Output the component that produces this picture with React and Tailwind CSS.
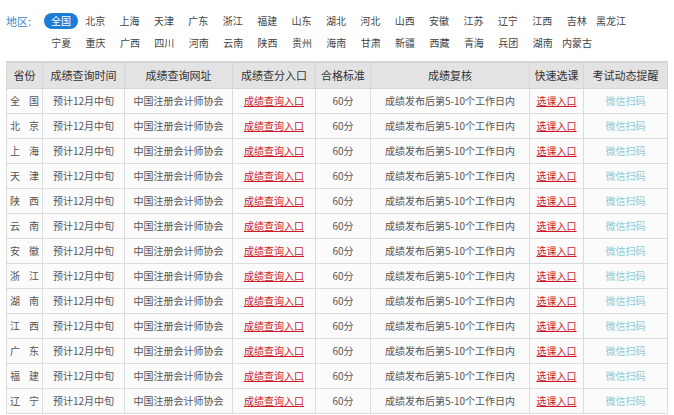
import React from "react";

const row1 = ["北京","上海","天津","广东","浙江","福建","山东","湖北","河北","山西","安徽","江苏","辽宁","江西","吉林","黑龙江"];
const row2 = ["宁夏","重庆","广西","四川","河南","云南","陕西","贵州","海南","甘肃","新疆","西藏","青海","兵团","湖南","内蒙古"];
const provs = [["全","国"],["北","京"],["上","海"],["天","津"],["陕","西"],["云","南"],["安","徽"],["浙","江"],["湖","南"],["江","西"],["广","东"],["福","建"],["辽","宁"]];
const widths = [36,82,108,83,55,159,54,84];
const heads = ["省份","成绩查询时间","成绩查询网址","成绩查分入口","合格标准","成绩复核","快速选课","考试动态提醒"];

export default function App() {
  return (
    <div className="w-[674px] h-[415px] overflow-hidden bg-white whitespace-nowrap" style={{fontFamily:'"Noto Sans CJK SC","Noto Sans",sans-serif'}}>
      <div className="pl-[6px] pt-[10px] flex text-[10px] leading-[22px]">
        <div className="w-[38px] text-[#3b86c8] text-[11px]">地区:</div>
        <div className="flex flex-col">
          <div className="flex">
            <div className="w-[34px] h-[16px] mt-[3px] rounded-full bg-[#1a7ed6] text-white leading-[16px] text-center">全国</div>
            {row1.map((t) => (
              <div key={t} className="w-[34.4px] text-center text-[#444]">{t}</div>
            ))}
          </div>
          <div className="flex">
            {row2.map((t) => (
              <div key={t} className="w-[34.4px] text-center text-[#444]">{t}</div>
            ))}
          </div>
        </div>
      </div>
      <div className="pl-[6px] pt-[7px]">
        <table className="table-fixed border-collapse w-[661px] text-[10px] text-[#555]">
          <colgroup>
            {widths.map((w, i) => <col key={i} style={{ width: w }} />)}
          </colgroup>
          <thead>
            <tr className="h-[26px] bg-[#e4e3e3] border-t-2 border-[#d6d6d6]">
              {heads.map((h) => (
                <th key={h} className="border border-[#d6d6d6] text-[11px] font-normal text-[#333] text-center p-0 leading-[24px]">{h}</th>
              ))}
            </tr>
          </thead>
          <tbody>
            {provs.map((p, i) => (
              <tr key={i} className="h-[25px] bg-[#fbfbfb] leading-[24px]">
                <td className="border border-[#dcdcdc] p-0">
                  <div className="flex justify-between px-[3px]"><span>{p[0]}</span><span>{p[1]}</span></div>
                </td>
                <td className="border border-[#dcdcdc] text-center p-0">预计12月中旬</td>
                <td className="border border-[#dcdcdc] text-center p-0">中国注册会计师协会</td>
                <td className="border border-[#dcdcdc] text-center p-0"><span className="text-[#cc1a2a] underline">成绩查询入口</span></td>
                <td className="border border-[#dcdcdc] text-center p-0">60分</td>
                <td className="border border-[#dcdcdc] text-center p-0">成绩发布后第5-10个工作日内</td>
                <td className="border border-[#dcdcdc] text-center p-0"><span className="text-[#cc1a2a] underline">选课入口</span></td>
                <td className="border border-[#dcdcdc] text-center p-0 text-[#8ccbd6]">微信扫码</td>
              </tr>
            ))}
          </tbody>
        </table>
      </div>
    </div>
  );
}
